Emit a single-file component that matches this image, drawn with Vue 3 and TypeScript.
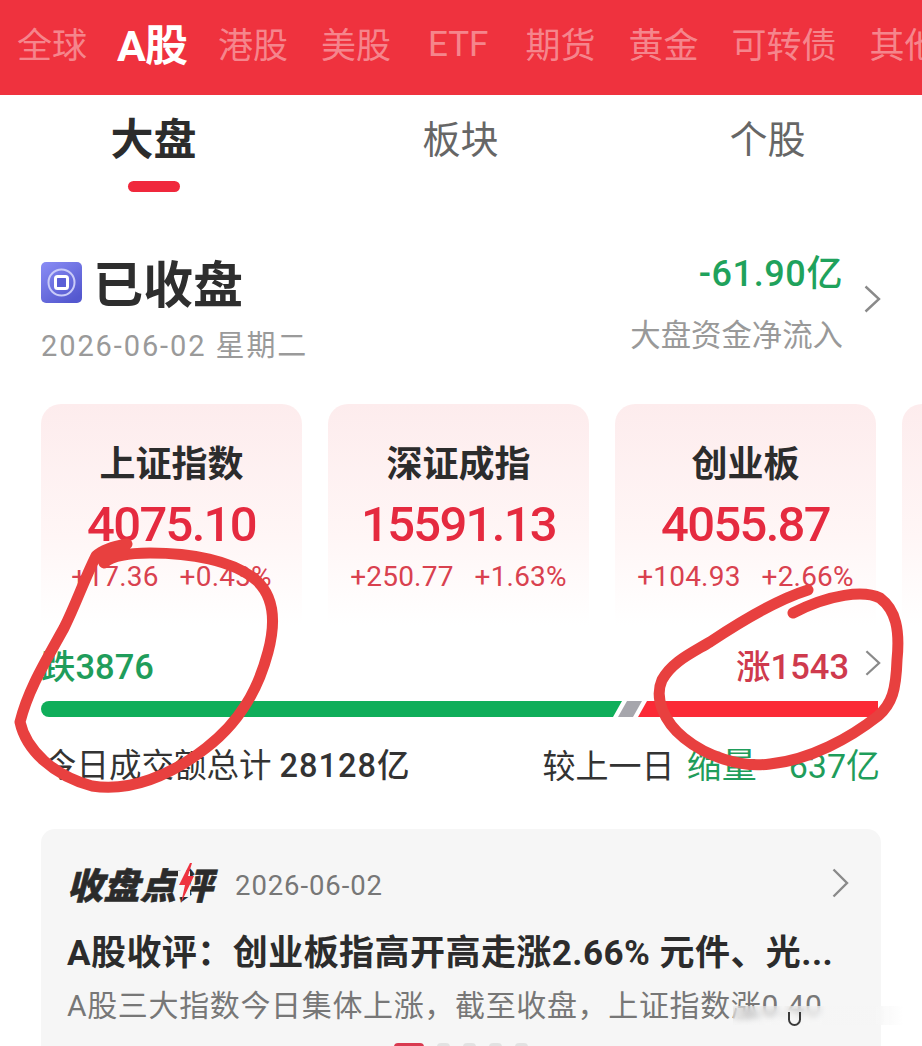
<script setup lang="ts">
interface IndexCard { name: string; value: string; change: string; percent: string }
const markets: string[] = ['全球', 'A股', '港股', '美股', 'ETF', '期货', '黄金', '可转债', '其他']
const subTabs: string[] = ['大盘', '板块', '个股']
const cards: IndexCard[] = [
  { name: '上证指数', value: '4075.10', change: '+17.36', percent: '+0.43%' },
  { name: '深证成指', value: '15591.13', change: '+250.77', percent: '+1.63%' },
  { name: '创业板', value: '4055.87', change: '+104.93', percent: '+2.66%' },
  { name: '', value: '', change: '', percent: '' }
]
const reviewTitle = 'A股收评\uFF1A创业板指高开高走涨2.66% 元件、光...'
const reviewDesc = 'A股三大指数今日集体上涨\uFF0C截至收盘\uFF0C上证指数涨0.40'
</script>

<template>
  <div class="page">
    <nav class="markets">
      <span
        v-for="m in markets"
        :key="m"
        class="market"
        :class="{ active: m === 'A股', latin: m === 'ETF' }"
      >{{ m }}</span>
    </nav>

    <div class="subtabs">
      <div v-for="t in subTabs" :key="t" class="subtab" :class="{ active: t === '大盘' }">
        <span>{{ t }}</span>
        <i v-if="t === '大盘'" class="underline"></i>
      </div>
    </div>

    <section class="status">
      <div>
        <div class="status-title">
          <svg class="coin" viewBox="0 0 41 41" width="41" height="41">
            <defs>
              <linearGradient id="coinBg" x1="0" y1="0" x2="0.7" y2="1">
                <stop offset="0" stop-color="#8a8df5" />
                <stop offset="1" stop-color="#5458cf" />
              </linearGradient>
            </defs>
            <rect width="41" height="41" rx="5" fill="url(#coinBg)" />
            <circle cx="20.5" cy="20.5" r="13" fill="none" stroke="#c9cbf8" stroke-width="2" />
            <rect x="14.5" y="14.5" width="12" height="12" rx="2" fill="#5a5ed6" stroke="#fff" stroke-width="3" />
          </svg>
          <span>已收盘</span>
        </div>
        <div class="status-date">2026-06-02 星期二</div>
      </div>
      <div class="flow">
        <div class="flow-text">
          <div class="flow-value">-61.90亿</div>
          <div class="flow-label">大盘资金净流入</div>
        </div>
        <svg class="chev flow-chev" viewBox="0 0 17 28" width="17" height="28"><path d="M1.5 1.5 15 14 1.5 26.5" /></svg>
      </div>
    </section>

    <section class="cards">
      <article v-for="(c, i) in cards" :key="i" class="card">
        <h3>{{ c.name }}</h3>
        <div class="card-value">{{ c.value }}</div>
        <div class="card-change"><span>{{ c.change }}</span><span>{{ c.percent }}</span></div>
      </article>
    </section>

    <section class="breadth">
      <span class="fall">跌3876</span>
      <div class="rise-wrap">
        <span class="rise">涨1543</span>
        <svg class="chev" viewBox="0 0 17 28" width="16" height="28"><path d="M1.5 1.5 15 14 1.5 26.5" /></svg>
      </div>
    </section>

    <div class="bar">
      <i class="bar-green"></i>
      <i class="bar-grey"></i>
      <i class="bar-red"></i>
    </div>

    <section class="volume">
      <div class="vol-left">今日成交额总计 <span class="num">28128亿</span></div>
      <div class="vol-right">较上一日 <span class="shrink">缩量</span><span class="amount">637亿</span></div>
    </section>

    <section class="review">
      <div class="review-head">
        <span class="review-logo">收盘点<span class="ping">评<svg class="bolt" viewBox="0 0 18 40" width="18" height="40"><rect x="1" y="8" width="12" height="26" fill="#f6f6f6" /><path d="M13 0 2 22h6L4 40l13-27h-6l4-13z" /></svg></span></span>
        <span class="review-date">2026-06-02</span>
        <svg class="chev review-chev" viewBox="0 0 17 30" width="17" height="30"><path d="M1.5 1.5 15 15 1.5 28.5" /></svg>
      </div>
      <h2 class="review-title">{{ reviewTitle }}</h2>
      <p class="review-desc">{{ reviewDesc }}</p>
      <div class="dots"><i class="dot on"></i><i class="dot"></i><i class="dot"></i><i class="dot"></i><i class="dot"></i></div>
    </section>

    <div class="smear"></div>
    <i class="smear-arc"></i>

    <svg class="ink" viewBox="0 0 922 1046" width="922" height="1046">
      <path d="M127 544C112 547 102 550 96 556 84 580 76 604 64 628 44 664 28 690 20 722 26 750 54 776 92 786 130 792 170 776 206 748 240 722 258 690 268 652 276 622 274 596 256 580 232 560 190 553 150 553 130 553 112 556 104 563" />
      <path d="M808 590C776 600 740 622 710 642 690 654 672 662 662 680 654 698 664 722 684 738 706 756 740 768 770 764 810 760 850 738 878 716 892 704 896 690 897 660 900 630 896 610 880 598 864 590 830 594 793 613" />
    </svg>
  </div>
</template>

<style>
html, body { margin: 0; padding: 0; background: #fff; }
</style>

<style scoped>
.page {
  position: relative;
  width: 922px;
  height: 1046px;
  overflow: hidden;
  background: #fff;
  font-family: "Roboto", "Noto Sans CJK SC", sans-serif;
  color: #333;
}
.markets {
  height: 95px;
  background: #ef323e;
  display: flex;
  align-items: center;
  gap: 33px;
  padding: 0 0 11px 17px;
  box-sizing: border-box;
  white-space: nowrap;
  overflow: hidden;
}
.market { font-size: 35px; color: rgba(255, 255, 255, 0.42); flex: none; }
.market.active { font-size: 43px; font-weight: 700; color: #fff; letter-spacing: -1px; margin: 0 -2px 0 -3px; }
.market.latin { margin: 5px 4px 0; }
.subtabs { display: grid; grid-template-columns: repeat(3, 307px); height: 105px; }
.subtab {
  position: relative;
  text-align: center;
  font-size: 38px;
  line-height: 46px;
  padding-top: 22px;
  color: #666;
}
.subtab.active { font-size: 43px; font-weight: 700; color: #2c2c2c; }
.underline {
  position: absolute;
  left: 128px;
  top: 86px;
  width: 52px;
  height: 11px;
  border-radius: 6px;
  background: #f0283c;
}
.status {
  display: flex;
  justify-content: space-between;
  padding: 50px 41px 0;
  height: 204px;
  box-sizing: border-box;
}
.status-title {
  display: flex;
  align-items: center;
  gap: 11px;
  font-size: 50px;
  font-weight: 700;
  line-height: 72px;
  color: #2e2e2e;
}
.coin { margin-top: -8px; }
.status-date { font-size: 29px; line-height: 40px; color: #9a9a9a; letter-spacing: 1.9px; margin-top: 4px; }
.flow { display: flex; align-items: center; gap: 21px; height: 110px; margin-top: -1px; }
.flow-text { text-align: right; }
.flow-value { font-size: 36px; line-height: 48px; font-weight: 500; color: #1fa25c; letter-spacing: 0.6px; }
.flow-label { font-size: 30.4px; line-height: 44px; margin-top: 16px; color: #999; }
.flow-chev { margin-top: -10px; }
.chev { flex: none; fill: none; stroke: #8a8a8a; stroke-width: 2.4; }
.cards {
  display: flex;
  gap: 26px;
  padding-left: 41px;
  height: 221px;
  overflow: hidden;
}
.card {
  flex: none;
  width: 261px;
  height: 221px;
  border-radius: 20px 20px 0 0;
  background: linear-gradient(#fdeced, #fff6f6 60%, #fff);
  text-align: center;
  padding-top: 37px;
  box-sizing: border-box;
}
.card h3 { margin: 0; height: 48px; font-size: 36px; line-height: 48px; font-weight: 700; color: #2c2c2c; }
.card-value {
  margin-top: 7px;
  height: 58px;
  font-size: 49px;
  line-height: 58px;
  font-weight: 500;
  letter-spacing: -1.7px;
  color: #e52a3f;
}
.card-change {
  display: flex;
  justify-content: center;
  gap: 21px;
  margin-top: 5px;
  font-size: 28px;
  line-height: 36px;
  letter-spacing: 0.2px;
  color: #d9414f;
}
.breadth {
  display: flex;
  justify-content: space-between;
  align-items: center;
  padding: 2px 41px 0;
  height: 76px;
  box-sizing: border-box;
  font-size: 34.5px;
  font-weight: 500;
}
.fall { color: #1f9d5b; }
.rise { color: #cf3a4d; }
.rise-wrap { display: flex; align-items: center; gap: 16px; }
.rise-wrap .chev { margin-top: -2px; }
.bar { display: flex; margin: 0 44px 0 41px; height: 16px; }
.bar i { display: block; height: 16px; }
.bar-green {
  flex: 0 0 581px;
  border-radius: 8px 0 0 8px;
  background: #0fae5a;
  clip-path: polygon(0 0, 100% 0, calc(100% - 9px) 100%, 0 100%);
}
.bar-grey {
  flex: 0 0 24px;
  margin-left: -4px;
  background: #a6a6ac;
  clip-path: polygon(9px 0, 100% 0, calc(100% - 9px) 100%, 0 100%);
}
.bar-red {
  flex: 1;
  margin-left: -4px;
  background: #fb2a36;
  clip-path: polygon(9px 0, 100% 0, 100% 100%, 0 100%);
}
.volume {
  display: flex;
  justify-content: space-between;
  padding: 25px 42px 0 44px;
  line-height: 48px;
  height: 112px;
  box-sizing: border-box;
  color: #333;
  white-space: nowrap;
}
.vol-left { font-size: 32.5px; }
.vol-right { font-size: 33px; }
.num { font-weight: 500; letter-spacing: 1px; }
.shrink { color: #1f9d5b; margin-left: 4px; font-size: 35px; }
.amount { color: #1f9d5b; margin-left: 32px; font-size: 34px; }
.review {
  margin: 0 41px;
  height: 260px;
  box-sizing: border-box;
  padding: 27px 26px 0;
  border-radius: 14px 14px 0 0;
  background: #f6f6f6;
}
.review-head { position: relative; display: flex; align-items: center; height: 54px; }
.review-logo {
  font-size: 36px;
  font-weight: 900;
  font-style: italic;
  color: #2b2b2b;
  letter-spacing: 0.5px;
  white-space: nowrap;
  -webkit-text-stroke: 0.6px #2b2b2b;
}
.ping { position: relative; display: inline-block; }
.bolt { position: absolute; left: 0; top: 6px; fill: #ee3340; stroke: none; }
.review-date { margin-left: 22px; margin-top: 4px; font-size: 27.5px; letter-spacing: 0.9px; color: #777; }
.review-chev { position: absolute; right: 6px; top: 12px; }
.review-title {
  margin: 21px 0 0;
  font-size: 35px;
  line-height: 46px;
  font-weight: 700;
  letter-spacing: 0.45px;
  color: #2c2c2c;
  white-space: nowrap;
}
.review-desc { margin: 8px 0 0; font-size: 30px; line-height: 42px; letter-spacing: 0.65px; color: #777; white-space: nowrap; }
.dots { display: flex; justify-content: center; gap: 13px; margin-top: 16px; }
.dot { width: 13px; height: 14px; border-radius: 4px; background: #e2e2e2; }
.dot.on { width: 30px; background: #d93a50; }
.smear {
  position: absolute;
  left: 733px;
  top: 1006px;
  width: 172px;
  height: 19px;
  background: linear-gradient(90deg, rgba(246, 246, 246, 0.3), rgba(246, 246, 246, 0.7) 55%, rgba(246, 246, 246, 0.7) 85%, rgba(255, 255, 255, 0));
  backdrop-filter: blur(3px);
}
.smear-arc {
  position: absolute;
  left: 788px;
  top: 1012px;
  width: 13px;
  height: 14px;
  border: 2px solid #3a3a3a;
  border-top: none;
  border-radius: 0 0 8px 8px;
  box-sizing: border-box;
}
.ink {
  position: absolute;
  left: 0;
  top: 0;
  fill: none;
  stroke: #e8403f;
  stroke-width: 11;
  stroke-linecap: round;
  stroke-linejoin: round;
  pointer-events: none;
}
</style>
